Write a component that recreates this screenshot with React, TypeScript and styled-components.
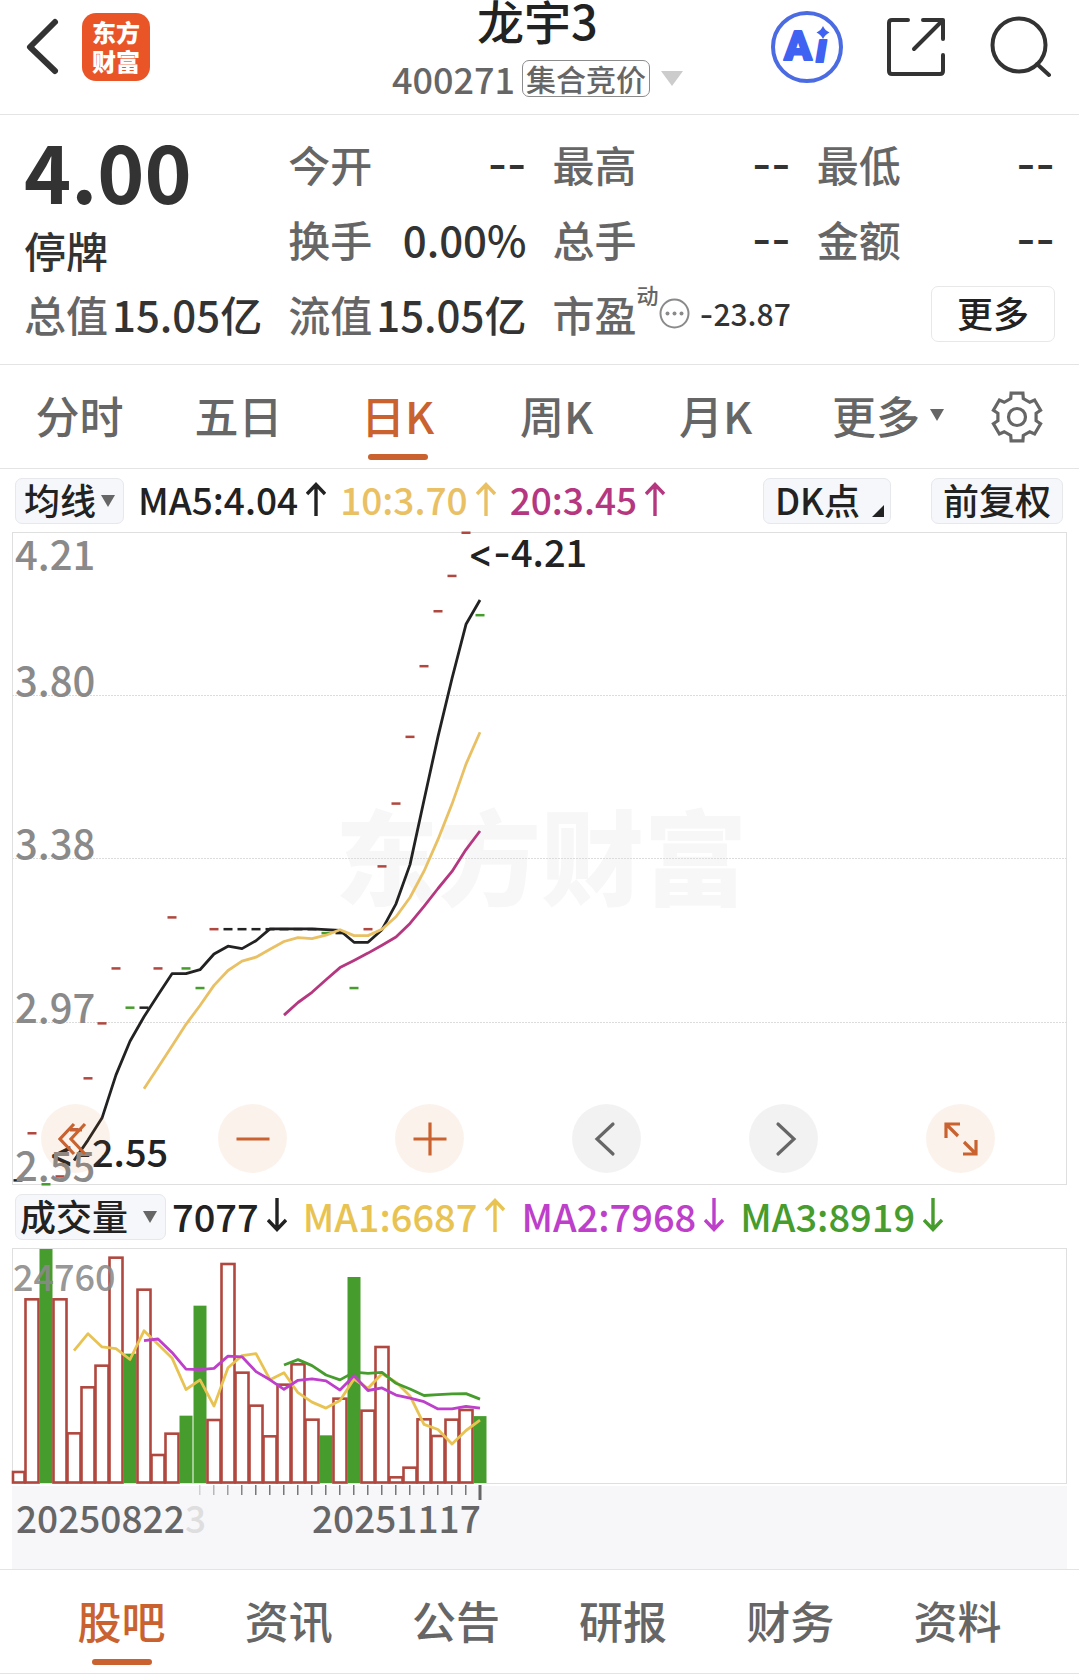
import React, { useState } from "react";
import styled, { createGlobalStyle } from "styled-components";

const cjk = '"Noto Sans CJK SC", sans-serif';
const dashFont = 'Inter, "Noto Sans CJK SC", sans-serif';

const color = {
  ink: "#222222",
  value: "#333333",
  label: "#666666",
  axis: "#8a8a8a",
  accent: "#c9622f",
  line: "#e4e4e4",
  chip: "#f5f7fa",
  red: "#b0483f",
  green: "#469c2c",
  yellow: "#e9c063",
  volYellow: "#e8c352",
  magenta: "#b53780",
  purple: "#bd3fca",
};

const GlobalStyle = createGlobalStyle`
  *, *::before, *::after { box-sizing: border-box; }
  body { margin: 0; background: #ffffff; }
  button, select { font: inherit; color: inherit; }
  button { cursor: pointer; }
`;

const Page = styled.div`
  font-family: ${cjk};
  font-weight: 500;
  color: ${color.value};
  background: #ffffff;
  overflow-x: hidden;
`;

/* ---------- header ---------- */

const Header = styled.header`
  display: grid;
  grid-template-columns: 1fr auto 1fr;
  align-items: center;
  height: 115px;
  padding: 0 28px 0 24px;
  border-bottom: 1px solid ${color.line};
`;

const HeaderSide = styled.div<{ $end?: boolean }>`
  display: flex;
  align-items: center;
  justify-content: ${(p) => (p.$end ? "flex-end" : "flex-start")};
  gap: ${(p) => (p.$end ? 43 : 22)}px;
  padding-bottom: 20px;
`;

const IconButton = styled.button`
  display: flex;
  padding: 0;
  border: 0;
  background: none;
`;

const Logo = styled.a`
  display: flex;
  flex-direction: column;
  align-items: center;
  width: 68px;
  height: 68px;
  padding-top: 4px;
  border-radius: 14px;
  background: #ea5528;
  color: #ffffff;
  font-size: 24px;
  font-weight: 900;
  line-height: 29px;
  text-decoration: none;
`;

const TitleBlock = styled.div`
  display: flex;
  flex-direction: column;
  align-items: center;
  gap: 12px;
  height: 114px;
`;

const Title = styled.h1`
  margin: 0;
  color: ${color.ink};
  font-size: 47px;
  font-weight: 500;
  line-height: 40px;
`;

const SubTitle = styled.button`
  display: flex;
  align-items: center;
  gap: 11px;
  padding: 0;
  border: 0;
  background: none;
  color: ${color.label};
  font-size: 36px;
  line-height: 52px;
`;

const SubTitleText = styled.span`
  display: flex;
  align-items: center;
  gap: 7px;
`;

const Badge = styled.span`
  padding: 0 3px;
  border: 1px solid #8c8c8c;
  border-radius: 7px;
  font-size: 30px;
  line-height: 35px;
`;

/* ---------- quote ---------- */

const Quote = styled.dl`
  display: grid;
  grid-template-columns: repeat(4, 1fr);
  grid-auto-rows: 75px;
  column-gap: 26px;
  margin: 0;
  padding: 11px 24px 13px;
  border-bottom: 1px solid ${color.line};
  font-size: 42px;
  line-height: 60px;
`;

const PriceCell = styled.div`
  grid-row: span 2;
  display: flex;
  flex-direction: column;
  justify-content: center;
  gap: 4px;
`;

const Price = styled.dt`
  font-size: 80px;
  font-weight: 700;
  line-height: 94px;
`;

const Status = styled.dd`
  margin: 0;
`;

const Pair = styled.div`
  display: flex;
  align-items: center;
  justify-content: space-between;
  white-space: nowrap;
`;

const Label = styled.dt`
  display: flex;
  align-items: center;
  color: ${color.label};
`;

const Value = styled.dd<{ $small?: boolean }>`
  margin: 0;
  font-size: ${(p) => (p.$small ? 30 : 42)}px;
`;

const Dash = styled.span`
  font-family: ${dashFont};
`;

const Sup = styled.sup`
  align-self: flex-start;
  font-size: 22px;
  line-height: 20px;
`;

const MoreCell = styled.div`
  display: flex;
  align-items: center;
  justify-content: flex-end;
`;

const MoreButton = styled.button`
  width: 124px;
  height: 56px;
  padding: 0 0 4px;
  border: 1px solid #e8e8e8;
  border-radius: 7px;
  background: #ffffff;
  color: ${color.ink};
  font-size: 36px;
  line-height: 50px;
`;

/* ---------- tabs ---------- */

const PeriodTabs = styled.nav`
  display: grid;
  grid-template-columns: repeat(5, 159fr) 186fr 98fr;
  height: 104px;
  border-bottom: 1px solid ${color.line};
`;

const SectionTabs = styled.nav`
  display: grid;
  grid-template-columns: repeat(6, 1fr);
  height: 105px;
  padding: 0 38px;
  border-top: 1px solid ${color.line};
  border-bottom: 1px solid ${color.line};
`;

const Tab = styled.button<{ $active?: boolean }>`
  position: relative;
  display: flex;
  align-items: center;
  justify-content: center;
  gap: 10px;
  padding: 0 0 4px;
  border: 0;
  background: none;
  color: ${(p) => (p.$active ? color.accent : color.label)};
  font-size: 44px;
  line-height: 64px;

  &::after {
    content: "";
    position: absolute;
    left: 50%;
    bottom: 8px;
    width: 60px;
    height: 6px;
    margin-left: -30px;
    border-radius: 3px;
    background: ${(p) => (p.$active ? color.accent : "transparent")};
  }
`;

const SettingsButton = styled(IconButton)`
  align-items: center;
  padding-left: 10px;
`;

/* ---------- charts ---------- */

const ChartArea = styled.main`
  padding: 0 12px;
`;

const Toolbar = styled.div`
  display: flex;
  align-items: center;
  gap: 14px;
  height: 63px;
  padding: 0 4px 0 3px;
  color: ${color.ink};
  font-size: 37px;
  white-space: nowrap;
`;

const VolumeToolbar = styled(Toolbar)`
  gap: 16px;
  font-size: 38px;
`;

const Legend = styled.span<{ $color: string; $tight?: boolean }>`
  display: flex;
  align-items: center;
  gap: 8px;
  margin-left: ${(p) => (p.$tight ? -10 : 0)}px;
  padding-bottom: 3px;
  color: ${(p) => p.$color};
`;

const ToolbarEnd = styled.div`
  display: flex;
  gap: 40px;
  margin-left: auto;
`;

const Chip = styled.button`
  display: flex;
  align-items: center;
  gap: 12px;
  height: 46px;
  padding: 0 11px 4px;
  border: 1px solid #e6e8ec;
  border-radius: 7px;
  background: ${color.chip};
  font-size: 36px;
  line-height: 40px;
`;

const CornerMark = styled.svg`
  align-self: flex-end;
  margin: 0 -5px 2px 0;
`;

const SelectBox = styled.label`
  display: grid;
  align-items: center;
  height: 46px;
  border: 1px solid #e6e8ec;
  border-radius: 7px;
  background: ${color.chip};
  font-size: 36px;

  > * { grid-area: 1 / 1; }
  > svg { justify-self: end; margin-right: 8px; pointer-events: none; }
`;

const Select = styled.select<{ $wide?: boolean }>`
  appearance: none;
  height: 44px;
  padding: 0 ${(p) => (p.$wide ? "36px 4px 4px" : "26px 4px 8px")};
  border: 0;
  background: none;
  line-height: 40px;
`;

const ChartBox = styled.div`
  position: relative;
`;

const ChartSvg = styled.svg`
  display: block;
  width: 100%;
  height: auto;
  overflow: visible;
  font-family: ${cjk};
  font-weight: 500;
  font-variant-ligatures: none;
  font-feature-settings: "calt" 0, "liga" 0;
`;

const ChartControls = styled.div`
  position: absolute;
  left: 29px;
  right: 72px;
  bottom: 12px;
  display: flex;
  justify-content: space-between;
`;

const RoundButton = styled.button<{ $muted?: boolean }>`
  display: flex;
  align-items: center;
  justify-content: center;
  width: 69px;
  height: 69px;
  padding: 0;
  border: 0;
  border-radius: 50%;
  background: ${(p) => (p.$muted ? "rgba(0, 0, 0, 0.05)" : "rgba(215, 110, 40, 0.09)")};
  color: ${(p) => (p.$muted ? color.label : color.accent)};
`;

/* ---------- data ---------- */

const prices = [
  2.56, 2.68, 2.55, 2.57, 2.69, 2.82, 2.96, 3.1, 3.0, 3.0, 3.1, 3.23, 3.1, 3.05, 3.2, 3.2, 3.2,
  3.2, 3.2, 3.2, 3.2, 3.2, 3.19, 3.19, 3.05, 3.2, 3.36, 3.52, 3.69, 3.87, 4.01, 4.1, 4.21, 4.0,
];

const volumes = [
  1164, 19434, 24760, 19434, 5255, 10123, 12415, 23843, 13685, 20457, 2963, 5220, 7125, 18764,
  6666, 23173, 11675, 8183, 4938, 10405, 12556, 6701, 5044, 8924, 21797, 7654, 14390, 600, 1622,
  6737, 4973, 6701, 7724, 7077,
];

const W = 1055;
const PRICE_H = 653;
const VOL_H = 236;
const AXIS_H = 85;

const slotX = (i: number) => 6 + 14 * i;
const priceY = (p: number) => 0.5 + (4.21 - p) * 392.5;
const volY = (v: number) => 235 - (v / 24760) * 234;

function movingAverage(data: number[], n: number, toY: (v: number) => number) {
  const points: string[] = [];
  for (let i = n - 1; i < data.length; i++) {
    const sum = data.slice(i - n + 1, i + 1).reduce((a, b) => a + b, 0);
    points.push(`${slotX(i)},${toY(sum / n).toFixed(1)}`);
  }
  return points.join(" ");
}

function priceColor(i: number) {
  if (i === 0) return color.ink;
  const d = prices[i] - prices[i - 1];
  return d > 0 ? color.red : d < 0 ? color.green : color.ink;
}

const isDown = (i: number) => i > 0 && prices[i] < prices[i - 1];

/* ---------- icons ---------- */

const Triangle = ({ w = 14, h = 12, fill = color.label }: { w?: number; h?: number; fill?: string }) => (
  <svg width={w} height={h} viewBox="0 0 14 12" preserveAspectRatio="none" aria-hidden="true">
    <path d="M0 0H14L7 12Z" fill={fill} />
  </svg>
);

const Arrow = ({ down }: { down?: boolean }) => (
  <svg width="20" height="34" viewBox="0 0 20 34" fill="none" stroke="currentColor" strokeWidth="3.4" role="img" aria-label={down ? "下降" : "上升"}>
    <path d={down ? "M10 0V31M1 22L10 31.500L19 22" : "M10 34V3M1 12L10 2.500L19 12"} />
  </svg>
);

const BackIcon = () => (
  <svg width="36" height="60" viewBox="0 0 36 60" fill="none" stroke="#333" strokeWidth="6" strokeLinecap="round" strokeLinejoin="round">
    <path d="M31 5L6 30L31 54" />
  </svg>
);

const AiIcon = () => (
  <svg width="72" height="72" viewBox="0 0 72 72">
    <circle cx="36" cy="36" r="34" fill="#fff" stroke="#4b6be3" strokeWidth="4" />
    <g fill="#3f62f2" stroke="#3f62f2" strokeLinejoin="round" fontFamily="Roboto, sans-serif" fontWeight="900">
      <text x="13" y="49" strokeWidth="2" fontSize="41">A</text>
      <text x="45" y="51" strokeWidth="2" fontSize="40" fontStyle="italic">ı</text>
    </g>
    <path d="M52 15Q54 19.500 58.500 21.500Q54 23.500 52 28Q50 23.500 45.500 21.500Q50 19.500 52 15Z" fill="#3f62f2" />
  </svg>
);

const ShareIcon = () => (
  <svg width="60" height="60" viewBox="0 0 60 60" fill="none" stroke="#333" strokeWidth="4" strokeLinecap="round" strokeLinejoin="round">
    <path d="M22 3H6Q3 3 3 6V54Q3 57 6 57H54Q57 57 57 54V38" />
    <path d="M37 3H57V22M56 4L28 32" />
  </svg>
);

const SearchIcon = () => (
  <svg width="62" height="62" viewBox="0 0 62 62" fill="none" stroke="#333" strokeWidth="4" strokeLinecap="round">
    <circle cx="30" cy="29" r="26.500" />
    <path d="M48 48L60 59" />
  </svg>
);

const MoreInfoIcon = () => (
  <svg width="31" height="31" viewBox="0 0 31 31" aria-hidden="true">
    <circle cx="15.500" cy="15.500" r="14" fill="none" stroke="#8a8a8a" strokeWidth="2" />
    {[8.5, 15.5, 22.5].map((x) => (
      <circle key={x} cx={x} cy="15.500" r="2" fill="#8a8a8a" />
    ))}
  </svg>
);

const gearPoints = Array.from({ length: 6 }, (_, k) =>
  [[19.5, -19], [24.5, -14], [24.5, 14], [19.5, 19]].map(([r, a]) => {
    const t = ((k * 60 + a - 90) * Math.PI) / 180;
    return `${(26 + r * Math.cos(t)).toFixed(1)},${(26 + r * Math.sin(t)).toFixed(1)}`;
  }),
)
  .flat()
  .join(" ");

const GearIcon = () => (
  <svg width="52" height="52" viewBox="0 0 52 52" fill="none" stroke={color.label} strokeWidth="3.200">
    <polygon points={gearPoints} />
    <circle cx="26" cy="26" r="8.500" />
  </svg>
);

const ControlIcon = ({ d, round }: { d: string; round?: boolean }) => (
  <svg width="36" height="36" viewBox="0 0 36 36" fill="none" stroke="currentColor" strokeWidth="3.200" strokeLinecap={round ? "round" : "butt"}>
    <path d={d} />
  </svg>
);

const controls = [
  { name: "更早", d: "M16 3L2 18L16 33M27 3L13 18L27 33M12 9H24" },
  { name: "缩小", d: "M1.500 18H34.500" },
  { name: "放大", d: "M1.500 18H34.500M18 1.500V34.500" },
  { name: "前移", d: "M24 3L8 18L24 33", muted: true },
  { name: "后移", d: "M12 3L28 18L12 33", muted: true },
  { name: "全屏", d: "M17 3H3V17M3 3L15 15M20 33H33V19M33 33L21 21" },
];

/* ---------- charts ---------- */

function PriceChart() {
  return (
    <ChartSvg viewBox={`0 0 ${W} ${PRICE_H}`} role="img" aria-label="日K线图">
      <text x="323" y="366" fontSize="103" fontWeight="900" fill="#f7f7f7">东方财富</text>
      <rect x="0.500" y="0.500" width={W - 1} height={PRICE_H - 1} fill="none" stroke="#dfdfdf" />
      {[163.5, 326.5, 490.5].map((y) => (
        <line key={y} x1="0" x2={W} y1={y} y2={y} stroke="#dcdcdc" strokeDasharray="2 1" />
      ))}
      {prices.map((p, i) => (
        <rect key={i} x={slotX(i) - 4.5} y={priceY(p) - 1} width="9" height="2.500" fill={priceColor(i)} />
      ))}
      <g fill="none" strokeWidth="2.800" strokeLinejoin="round">
        <polyline points={movingAverage(prices, 5, priceY)} stroke={color.ink} />
        <polyline points={movingAverage(prices, 10, priceY)} stroke={color.yellow} />
        <polyline points={movingAverage(prices, 20, priceY)} stroke={color.magenta} />
      </g>
      <g fill={color.ink} fontSize="38">
        <text x="456" y="35"><tspan fontFamily={dashFont}>&lt;-</tspan>4.21</text>
        <text x="37" y="635"><tspan fontFamily={dashFont}>&lt;-</tspan>2.55</text>
      </g>
      <g fill={color.axis} fontSize="40">
        <text x="3" y="38">4.21</text>
        <text x="3" y="164">3.80</text>
        <text x="3" y="327">3.38</text>
        <text x="3" y="491">2.97</text>
        <text x="3" y="649">2.55</text>
      </g>
    </ChartSvg>
  );
}

function VolumeChart() {
  return (
    <ChartSvg viewBox={`0 0 ${W} ${VOL_H}`} role="img" aria-label="成交量图">
      <rect x="0.500" y="0.500" width={W - 1} height={VOL_H - 1} fill="none" stroke="#dfdfdf" />
      {volumes.map((v, i) =>
        isDown(i) ? (
          <rect key={i} x={slotX(i) - 6.5} y={volY(v)} width="13" height={235 - volY(v)} fill={color.green} />
        ) : (
          <rect key={i} x={slotX(i) - (i ? 6.5 : 5)} y={volY(v)} width={i ? 13 : 11.5} height={234.5 - volY(v)} fill="#fff" stroke={color.red} strokeWidth="2.600" />
        ),
      )}
      <g fill="none" strokeWidth="2.800" strokeLinejoin="round">
        <polyline points={movingAverage(volumes, 5, volY)} stroke={color.volYellow} />
        <polyline points={movingAverage(volumes, 20, volY)} stroke={color.green} />
        <polyline points={movingAverage(volumes, 10, volY)} stroke={color.purple} />
      </g>
      <text x="1" y="43" fontSize="36" fill={color.axis} fillOpacity="0.900">24760</text>
    </ChartSvg>
  );
}

function DateAxis() {
  const last = prices.length - 1;
  return (
    <ChartSvg viewBox={`0 0 ${W} ${AXIS_H}`} role="img" aria-label="日期">
      <rect x="0" y="2" width={W} height={AXIS_H - 2} fill="#f7f7fa" />
      {prices.map((_, i) =>
        i < 13 ? null : (
          <rect
            key={i}
            x={slotX(i) - (i === last ? 1.5 : 1)}
            y="1"
            width={i === last ? 3 : 1.5}
            height={i === last ? 15 : 10}
            fill={i === last ? color.label : "#777"}
            opacity={Math.min(1, 0.3 + (i - 13) * 0.2)}
          />
        ),
      )}
      <g fontSize="37">
        <text x="173" y="49" fill="#dededf">3</text>
        <text x="4" y="49" fill={color.label}>20250822</text>
        <text x="300" y="49" fill={color.label}>20251117</text>
      </g>
    </ChartSvg>
  );
}

/* ---------- page ---------- */

const Empty = () => (
  <Value>
    <Dash>--</Dash>
  </Value>
);

const periods = ["分时", "五日", "日K", "周K", "月K"];
const sections = ["股吧", "资讯", "公告", "研报", "财务", "资料"];

export default function App() {
  const [period, setPeriod] = useState("日K");
  const [section, setSection] = useState("股吧");

  return (
    <Page>
      <GlobalStyle />
      <Header>
        <HeaderSide>
          <IconButton aria-label="返回"><BackIcon /></IconButton>
          <Logo href="#home">
            <span>东方</span>
            <span>财富</span>
          </Logo>
        </HeaderSide>
        <TitleBlock>
          <Title>龙宇3</Title>
          <SubTitle>
            <SubTitleText>
              400271
              <Badge>集合竞价</Badge>
            </SubTitleText>
            <Triangle w={22} h={15} fill="#cccccc" />
          </SubTitle>
        </TitleBlock>
        <HeaderSide $end>
          <IconButton aria-label="AI"><AiIcon /></IconButton>
          <IconButton aria-label="分享"><ShareIcon /></IconButton>
          <IconButton aria-label="搜索"><SearchIcon /></IconButton>
        </HeaderSide>
      </Header>

      <Quote>
        <PriceCell>
          <Price>4.00</Price>
          <Status>停牌</Status>
        </PriceCell>
        <Pair><Label>今开</Label><Empty /></Pair>
        <Pair><Label>最高</Label><Empty /></Pair>
        <Pair><Label>最低</Label><Empty /></Pair>
        <Pair><Label>换手</Label><Value>0.00%</Value></Pair>
        <Pair><Label>总手</Label><Empty /></Pair>
        <Pair><Label>金额</Label><Empty /></Pair>
        <Pair><Label>总值</Label><Value>15.05亿</Value></Pair>
        <Pair><Label>流值</Label><Value>15.05亿</Value></Pair>
        <Pair>
          <Label>市盈<Sup>动</Sup><MoreInfoIcon /></Label>
          <Value $small><Dash>-</Dash>23.87</Value>
        </Pair>
        <MoreCell><MoreButton>更多</MoreButton></MoreCell>
      </Quote>

      <PeriodTabs>
        {periods.map((p) => (
          <Tab key={p} $active={p === period} onClick={() => setPeriod(p)}>{p}</Tab>
        ))}
        <Tab>更多<Triangle /></Tab>
        <SettingsButton aria-label="设置"><GearIcon /></SettingsButton>
      </PeriodTabs>

      <ChartArea>
        <Toolbar>
          <SelectBox>
            <Select aria-label="主图指标"><option>均线</option></Select>
            <Triangle />
          </SelectBox>
          <Legend $color={color.ink}>MA5:4.04<Arrow /></Legend>
          <Legend $color={color.yellow}>10:3.70<Arrow /></Legend>
          <Legend $color={color.magenta}>20:3.45<Arrow /></Legend>
          <ToolbarEnd>
            <Chip>
              DK点
              <CornerMark width="12" height="12" viewBox="0 0 12 12"><path d="M12 0V12H0Z" fill={color.ink} /></CornerMark>
            </Chip>
            <Chip>前复权</Chip>
          </ToolbarEnd>
        </Toolbar>
        <ChartBox>
          <PriceChart />
          <ChartControls>
            {controls.map((c) => (
              <RoundButton key={c.name} aria-label={c.name} $muted={c.muted}>
                <ControlIcon d={c.d} round={c.muted} />
              </RoundButton>
            ))}
          </ChartControls>
        </ChartBox>
        <VolumeToolbar>
          <SelectBox>
            <Select $wide aria-label="副图指标"><option>成交量</option></Select>
            <Triangle />
          </SelectBox>
          <Legend $color={color.ink} $tight>7077<Arrow down /></Legend>
          <Legend $color={color.volYellow}>MA1:6687<Arrow /></Legend>
          <Legend $color={color.purple}>MA2:7968<Arrow down /></Legend>
          <Legend $color={color.green}>MA3:8919<Arrow down /></Legend>
        </VolumeToolbar>
        <VolumeChart />
        <DateAxis />
      </ChartArea>

      <SectionTabs>
        {sections.map((s) => (
          <Tab key={s} $active={s === section} onClick={() => setSection(s)}>{s}</Tab>
        ))}
      </SectionTabs>
    </Page>
  );
}
